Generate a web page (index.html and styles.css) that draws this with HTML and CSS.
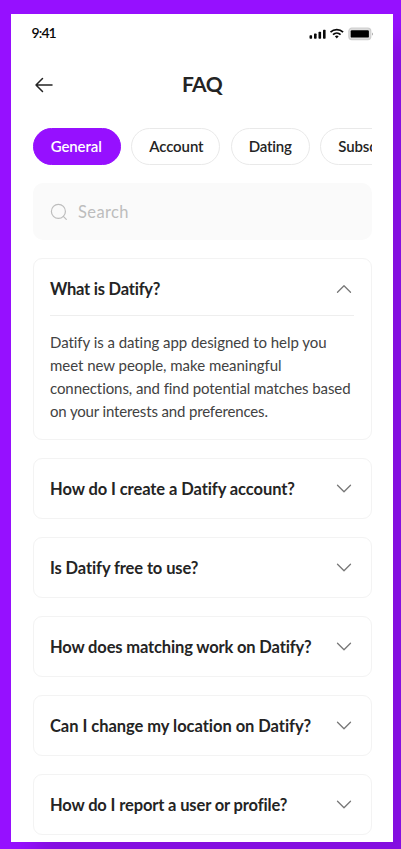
FILE: index.html
```html
<!DOCTYPE html>
<html lang="en">
<head>
<meta charset="utf-8">
<title>FAQ</title>
<link rel="stylesheet" href="styles.css">
</head>
<body>
<main class="phone">
  <div class="status">
    <span class="time">9:41</span>
    <svg class="indicators" width="64" height="14" viewBox="0 0 64 14">
      <g fill="#090909">
        <rect x="0.5" y="8.2" width="2.6" height="3.6" rx=".7"/>
        <rect x="5" y="6.5" width="2.6" height="5.3" rx=".7"/>
        <rect x="9.5" y="4.7" width="2.6" height="7.1" rx=".7"/>
        <rect x="14" y="2.8" width="2.6" height="9" rx=".7"/>
        <path d="M25.9 9.3a3 3 0 0 1 3.8 0l-1.9 2.2z"/>
      </g>
      <g fill="none" stroke="#090909" stroke-width="1.7">
        <path d="M21.5 5.1a9 9 0 0 1 12.6 0M24 7.6a5.5 5.5 0 0 1 7.6 0"/>
      </g>
      <rect x="39.8" y="1.2" width="22" height="11.4" rx="3" fill="#dcdcdc" stroke="#cfcfcf" stroke-width="1.2"/>
      <rect x="41.7" y="3.2" width="18.2" height="7.4" rx="1.2" fill="#000"/>
      <path d="M63 5.5v3q1-.5 1-1.5t-1-1.5z" fill="#aaa"/>
    </svg>
  </div>
  <header class="header">
    <svg class="back" width="20" height="18" viewBox="0 0 20 18"><path d="M18 9H2M8.5 2.5L2 9l6.5 6.5"/></svg>
    <h1 class="title">FAQ</h1>
  </header>
  <nav class="tabs">
    <span class="tab tab-active">General</span>
    <span class="tab tab-account">Account</span>
    <span class="tab tab-dating">Dating</span>
    <span class="tab tab-subscription">Subscription</span>
  </nav>
  <div class="search">
    <svg width="18" height="18" viewBox="0 0 18 18"><circle cx="8.4" cy="8.4" r="7"/><path d="M13.3 13.3l3 3"/></svg>
    <span class="placeholder">Search</span>
  </div>
  <section class="list">
    <article class="card card-open">
      <div class="question"><h2 class="q1">What is Datify?</h2><svg class="chevron" width="16" height="10" viewBox="0 0 16 10"><path d="M1.5 8.3L8 1.8l6.5 6.5"/></svg></div>
      <p class="answer"><span class="a1">Datify is a dating app designed to help you</span><br><span class="a2">meet new people, make meaningful</span><br><span class="a3">connections, and find potential matches based</span><br><span class="a4">on your interests and preferences.</span></p>
    </article>
    <article class="card"><div class="question"><h2 class="q2">How do I create a Datify account?</h2><svg class="chevron" width="16" height="10" viewBox="0 0 16 10"><path d="M1.5 1.3L8 7.8l6.5-6.5"/></svg></div></article>
    <article class="card"><div class="question"><h2 class="q3">Is Datify free to use?</h2><svg class="chevron" width="16" height="10" viewBox="0 0 16 10"><path d="M1.5 1.3L8 7.8l6.5-6.5"/></svg></div></article>
    <article class="card"><div class="question"><h2 class="q4">How does matching work on Datify?</h2><svg class="chevron" width="16" height="10" viewBox="0 0 16 10"><path d="M1.5 1.3L8 7.8l6.5-6.5"/></svg></div></article>
    <article class="card"><div class="question"><h2 class="q5">Can I change my location on Datify?</h2><svg class="chevron" width="16" height="10" viewBox="0 0 16 10"><path d="M1.5 1.3L8 7.8l6.5-6.5"/></svg></div></article>
    <article class="card"><div class="question"><h2 class="q6">How do I report a user or profile?</h2><svg class="chevron" width="16" height="10" viewBox="0 0 16 10"><path d="M1.5 1.3L8 7.8l6.5-6.5"/></svg></div></article>
  </section>
</main>
</body>
</html>
```

FILE: styles.css
```css
* { box-sizing: border-box; }
body {
  margin: 0;
  height: 849px;
  padding: 14px 8px 0 11px;
  overflow: hidden;
  background: #9610ff;
  font-family: Lato, "Open Sans", sans-serif;
  font-variant-ligatures: none;
  color: #242424;
}
.phone {
  height: 827.5px;
  padding: 0 21.5px;
  overflow: hidden;
  background: #fff;
  box-shadow: 24px 24px 24px rgba(0, 0, 0, .13);
}
svg { display: block; flex: none; }
.status { display: flex; justify-content: space-between; height: 40px; padding-top: 11px; }
.time { margin-left: -1px; font-size: 14px; line-height: 16px; font-weight: 600; letter-spacing: -.9px; color: #090909; }
.indicators { margin: 2px -1px 0 0; }
.header { display: flex; align-items: center; height: 62px; }
.back { margin: 0 0 0 1.5px; fill: none; stroke: #242424; stroke-width: 1.5; stroke-linecap: round; stroke-linejoin: round; }
.title { margin: -2px 21.5px 0 0; flex: 1; text-align: center; font-size: 21px; line-height: 28px; font-weight: 700; letter-spacing: -.5px; }
.tabs { display: flex; gap: 10.5px; margin-top: 11.5px; overflow: hidden; }
.tab {
  flex: none;
  display: flex;
  align-items: center;
  height: 37.5px;
  padding-left: 17.2px;
  border: 1px solid #e9e9e9;
  border-radius: 19px;
  font-size: 15px;
  font-weight: 600;
  letter-spacing: -.1px;
  white-space: nowrap;
}
.tab-active { width: 88px; border-color: #9610ff; background: #9610ff; color: #fff; }
.tab-account { width: 89px; }
.tab-dating { width: 79px; letter-spacing: -.2px; }
.tab-subscription { width: 122px; }
.search {
  display: flex;
  align-items: center;
  gap: 10px;
  height: 57px;
  margin-top: 18px;
  padding: 1px 0 0 17.5px;
  border-radius: 10px;
  background: #fafafa;
  font-size: 16.5px;
  letter-spacing: .4px;
  color: #bdbdbd;
}
.search svg { fill: none; stroke: #bdbdbd; stroke-width: 1.2; stroke-linecap: round; }
.list { display: grid; gap: 18px; margin-top: 18px; }
.card { height: 61px; border: 1px solid #f3f3f3; border-radius: 9px; padding: 0 17px 0 16.5px; }
.card-open { height: 182px; }
.question { display: flex; align-items: center; justify-content: space-between; height: 59px; }
.card-open .question { height: 57px; padding-top: 3px; border-bottom: 1px solid #eee; }
.question h2 { margin: 0; font-size: 16.5px; line-height: 22px; font-weight: 700; white-space: nowrap; }
.chevron { margin-right: 2px; fill: none; stroke: #777; stroke-width: 1.3; stroke-linecap: round; stroke-linejoin: round; }
.answer { margin: 15px 0 0; font-size: 15px; line-height: 23px; color: #424242; white-space: nowrap; }

/* Optical tracking per line */
.q1 { letter-spacing: -.22px; }
.q2 { letter-spacing: -.08px; }
.q3 { letter-spacing: -.11px; }
.q4 { letter-spacing: -.15px; }
.q5 { letter-spacing: -.04px; }
.q6 { letter-spacing: -.14px; }
.a1 { letter-spacing: -.05px; }
.a2 { letter-spacing: -.03px; }
.a3 { letter-spacing: -.08px; }
.a4 { letter-spacing: -.15px; }
```
